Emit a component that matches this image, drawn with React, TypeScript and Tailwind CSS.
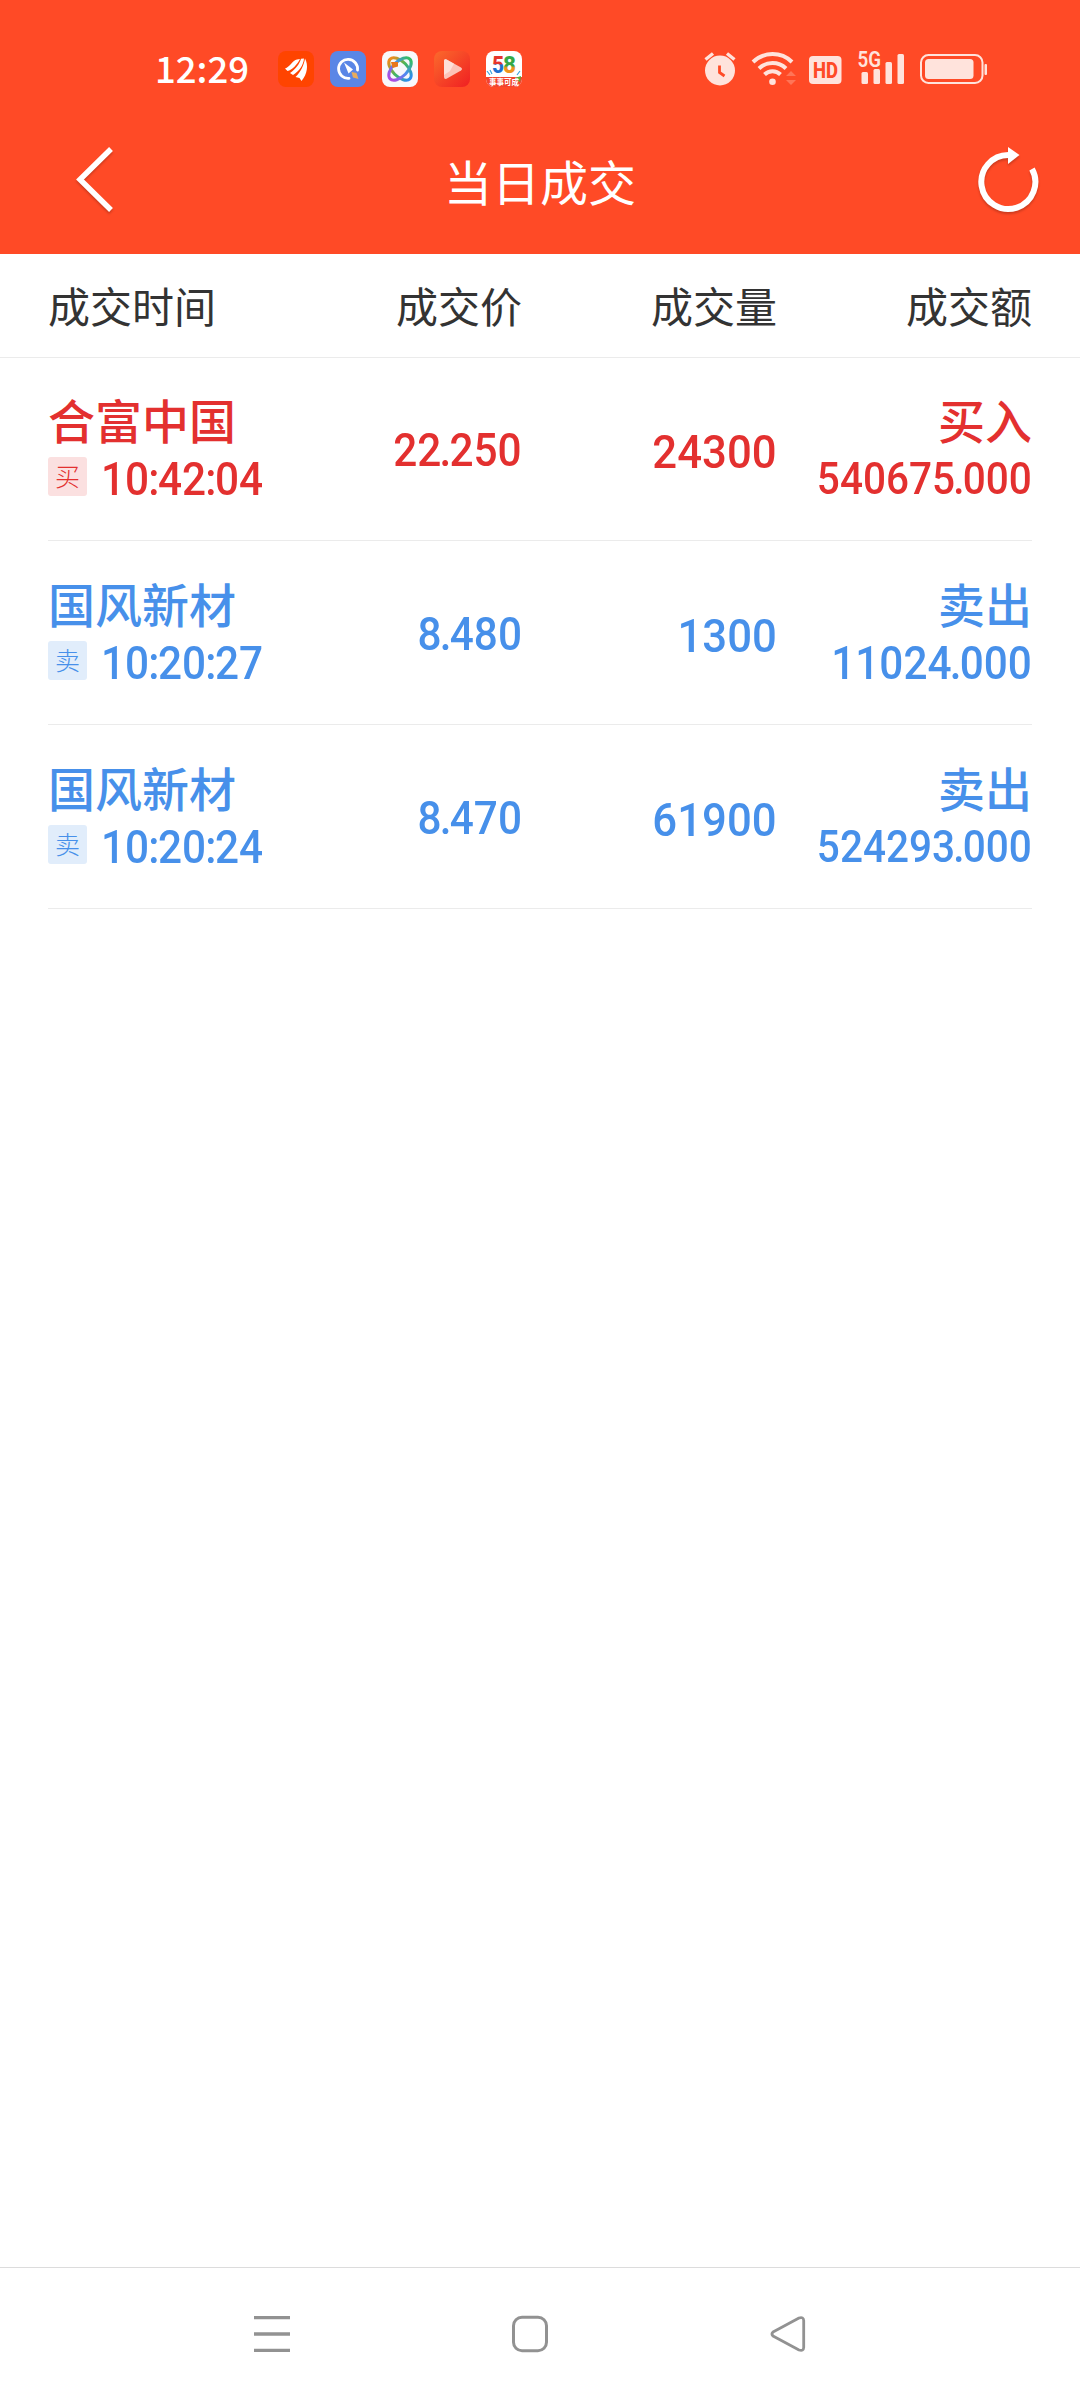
import React from 'react';

type Trade = {
  name: string;
  time: string;
  price: string;
  volume: string;
  amount: string;
  side: 'buy' | 'sell';
};

const trades: Trade[] = [
  { name: '合富中国', time: '10:42:04', price: '22.250', volume: '24300', amount: '540675.000', side: 'buy' },
  { name: '国风新材', time: '10:20:27', price: '8.480', volume: '1300', amount: '11024.000', side: 'sell' },
  { name: '国风新材', time: '10:20:24', price: '8.470', volume: '61900', amount: '524293.000', side: 'sell' },
];

const sides = {
  buy: { tag: '买', label: '买入', text: 'text-[#e3302f]', badge: 'bg-[#fbe0e0]' },
  sell: { tag: '卖', label: '卖出', text: 'text-[#4790ea]', badge: 'bg-[#e1edfb]' },
};

function AppIcons() {
  return (
    <div className="flex items-center gap-4">
      <svg width="36" height="36" viewBox="0 0 36 36">
        <rect width="36" height="36" rx="8" fill="#ff4400" />
        <path d="M7 17.500 C12 16 14.500 9 19 8.500 L22 8 C19.500 13 14 19.500 9.500 20 Z" fill="#fff" />
        <path d="M12 22 C18 18 21.500 13 23 7.800 L26 7.500 C25.500 14 21 20.500 15 24 Z" fill="#fff" />
        <path d="M17.500 26 C23 20.500 26 14 27 7.500 C30.500 14 29.500 23 23.500 30 L21.500 27 Z" fill="#fff" />
      </svg>
      <svg width="36" height="36" viewBox="0 0 36 36">
        <rect width="36" height="36" rx="8" fill="#5a86e6" />
        <path d="M19 27.300 A9.500 9.500 0 1 1 27.500 19" fill="none" stroke="#fff" strokeWidth="2.800" strokeLinecap="round" />
        <path d="M14 11.500 L23 18.500 L18.500 22.500 Z" fill="#fff" />
        <path d="M21.500 21 L26.500 22 L28.500 28 L23 26.500 Z" fill="#e8ac5c" />
      </svg>
      <svg width="36" height="36" viewBox="0 0 36 36">
        <defs>
          <linearGradient id="orbitA" x1="0" y1="0" x2="0" y2="1">
            <stop offset="0" stopColor="#f08a1c" />
            <stop offset="0.500" stopColor="#45b85c" />
            <stop offset="1" stopColor="#2d8cf0" />
          </linearGradient>
          <linearGradient id="orbitB" x1="0" y1="0" x2="0" y2="1">
            <stop offset="0" stopColor="#35bd62" />
            <stop offset="0.450" stopColor="#4b8df2" />
            <stop offset="1" stopColor="#b04be0" />
          </linearGradient>
        </defs>
        <rect width="36" height="36" rx="8" fill="#f8f8fb" />
        <ellipse cx="18" cy="18" rx="7.500" ry="14" transform="rotate(-45 18 18)" fill="none" stroke="url(#orbitA)" strokeWidth="3" />
        <ellipse cx="18" cy="18" rx="7.500" ry="14" transform="rotate(45 18 18)" fill="none" stroke="url(#orbitB)" strokeWidth="3" />
        <path d="M9 11 H16 V15.500 L10.500 17 Z" fill="#e8761d" />
      </svg>
      <svg width="36" height="36" viewBox="0 0 36 36">
        <defs>
          <linearGradient id="play" x1="0" y1="0" x2="1" y2="1">
            <stop offset="0" stopColor="#fb6a2c" />
            <stop offset="1" stopColor="#f01f22" />
          </linearGradient>
        </defs>
        <rect width="36" height="36" rx="8" fill="url(#play)" />
        <path d="M12.500 8.500 L27 16.500 Q29 18 27 19.500 L12.500 27.800 Q10 28.500 10 26 V10 Q10 7.500 12.500 8.500 Z" fill="#fcc3b8" />
        <path d="M10 10 Q10 7.500 12.500 8.500 L20 12.700 L16 20 L10 24 Z" fill="#fee0d8" />
      </svg>
      <svg width="36" height="36" viewBox="0 0 36 36">
        <defs>
          <clipPath id="tile"><rect width="36" height="36" rx="8" /></clipPath>
          <linearGradient id="five" x1="0" y1="0" x2="0" y2="1">
            <stop offset="0.450" stopColor="#e5352b" />
            <stop offset="0.500" stopColor="#1f6fd0" />
          </linearGradient>
          <linearGradient id="eight" x1="0" y1="0" x2="0" y2="1">
            <stop offset="0.520" stopColor="#36a845" />
            <stop offset="0.600" stopColor="#f0941e" />
          </linearGradient>
        </defs>
        <g clipPath="url(#tile)">
          <rect width="36" height="36" fill="#fff" />
          <rect y="26" width="36" height="10" fill="#f2452e" />
          <path d="M1 20 L4 24 M4 19 L6 23 M31 24 L34 20" stroke="#37a5e0" strokeWidth="1.200" />
          <path d="M29 27 L35 25 L34 31 Z" fill="#4fae3d" />
        </g>
        <g fontFamily="Roboto, sans-serif" fontSize="24" fontWeight="800">
          <text x="6" y="22" fill="url(#five)" textLength="12" lengthAdjust="spacingAndGlyphs">5</text>
          <text x="17" y="22" fill="url(#eight)" textLength="13" lengthAdjust="spacingAndGlyphs">8</text>
        </g>
        <text x="3" y="34" fontSize="8.500" fontWeight="700" fill="#fff" textLength="30" lengthAdjust="spacingAndGlyphs">事事可成</text>
      </svg>
    </div>
  );
}

function SystemIcons() {
  return (
    <svg width="290" height="60" viewBox="700 39 290 60" fill="#ffe3dc">
      <circle cx="720" cy="70.500" r="15" />
      <path d="M705.500 59.500 L713 53.500 M734.500 59.500 L727 53.500" stroke="#ffe3dc" strokeWidth="3.400" />
      <path d="M719.500 65.500 V72.500 L724.500 76" fill="none" stroke="#ff4a26" strokeWidth="2.800" />

      <circle cx="772.500" cy="81.700" r="3.300" />
      <g fill="none" stroke="#ffe3dc" strokeWidth="4">
        <path d="M753 62 A28 28 0 0 1 792 62" />
        <path d="M759 68.500 A19.500 19.500 0 0 1 786 68.500" />
        <path d="M764.500 74.500 A11.500 11.500 0 0 1 780.500 74.500" />
      </g>
      <path d="M786 76 L791 71 L796 76 Z M786 80 L791 85 L796 80 Z" fill="#ff7557" />

      <rect x="809" y="56" width="32.500" height="28" rx="4" />
      <text x="813" y="78" fontSize="22" fontWeight="800" fill="#ff4a26" textLength="25" lengthAdjust="spacingAndGlyphs" fontFamily="Roboto, sans-serif">HD</text>

      <text x="857.500" y="67.300" fontSize="21.500" fontWeight="600" textLength="23.500" lengthAdjust="spacingAndGlyphs" fontFamily="Roboto, sans-serif">5G</text>
      <rect x="861.500" y="72" width="6.500" height="12" rx="1.500" />
      <rect x="873.500" y="69" width="6.500" height="15" rx="1.500" />
      <rect x="885.500" y="62" width="6.500" height="22" rx="1.500" />
      <rect x="897.500" y="54" width="6.500" height="30" rx="1.500" />

      <rect x="921" y="55" width="61.500" height="28" rx="7.500" fill="none" stroke="#ffe3dc" strokeWidth="2" />
      <rect x="925" y="59" width="48.500" height="20" rx="3.500" />
      <rect x="984.500" y="64" width="2.500" height="11" rx="1" />
    </svg>
  );
}

function StatusBar() {
  return (
    <div className="flex h-[108px] items-center pt-[30px] pl-[155px] pr-[90px]">
      <span className="w-[123px] pb-[2px] text-[36.5px] leading-none font-medium text-white">12:29</span>
      <AppIcons />
      <div className="ml-auto">
        <SystemIcons />
      </div>
    </div>
  );
}

function TitleBar() {
  return (
    <div className="flex h-[146px] items-center justify-between pl-[72px] pr-[38px]">
      <svg width="68" height="72" viewBox="72 145 68 72" fill="none" className="drop-shadow-[0_2px_1px_rgba(0,0,0,0.2)]">
        <path d="M111 149 L80 179.500 L111 210" stroke="#fff" strokeWidth="5.500" />
      </svg>
      <h1 className="mr-[34px] pb-[2px] text-[48px] leading-[56px] text-white">当日成交</h1>
      <svg width="68" height="72" viewBox="974 145 68 72" fill="none" className="drop-shadow-[0_2px_1px_rgba(0,0,0,0.2)]">
        <path d="M1009 155 A27 27 0 1 0 1032 169" stroke="#fff" strokeWidth="6" />
        <path d="M1008 147 L1019.500 155 L1008 164 Z" fill="#fff" />
      </svg>
    </div>
  );
}

// Narrow figures with tightly set colons and points
function Digits({ value, className }: { value: string; className: string }) {
  return (
    <span className={`inline-block font-['Roboto',sans-serif] whitespace-nowrap ${className}`}>
      {value.split(/([:.])/).map((part, index) =>
        part === ':' || part === '.' ? (
          <span key={index} className={part === ':' ? '-ml-px tracking-[-1.5px]' : '-ml-[2px] tracking-[-2px]'}>{part}</span>
        ) : (
          part
        )
      )}
    </span>
  );
}

function TradeRow({ trade }: { trade: Trade }) {
  const side = sides[trade.side];
  const amountSize = trade.amount.length > 9 ? 'text-[45px]' : 'text-[47px]';

  return (
    <div className={`mx-12 grid h-[184px] grid-cols-[219px_255px_255px_255px] border-b border-[#ebebeb] font-medium ${side.text}`}>
      <div className="pt-[34px]">
        <div className="text-[47px] leading-[56px] whitespace-nowrap">{trade.name}</div>
        <div className="mt-[10px] flex h-[39px] items-start">
          <span className={`flex size-[39px] shrink-0 items-center justify-center rounded-[3px] pb-[2px] text-[25px] leading-none font-light ${side.badge}`}>
            {side.tag}
          </span>
          <Digits value={trade.time} className="mt-[2px] ml-[14px] origin-left scale-x-[0.9] text-[47px] leading-[39px]" />
        </div>
      </div>
      <div className="pt-[73px] text-right">
        <Digits value={trade.price} className="origin-right scale-x-[0.9] text-[47px] leading-[40px]" />
      </div>
      <div className="pt-[75px] text-right">
        <Digits value={trade.volume} className="origin-right scale-x-[0.93] text-[47px] leading-[40px]" />
      </div>
      <div className="flex flex-col items-end pt-[34px]">
        <div className="text-[47px] leading-[56px]">{side.label}</div>
        <Digits value={trade.amount} className={`mt-[12px] origin-right scale-x-[0.9] leading-[39px] ${amountSize}`} />
      </div>
    </div>
  );
}

function NavBar() {
  return (
    <nav className="flex h-[133px] items-center justify-between border-t border-[#dcdcdc] pl-[254px] pr-[274px]">
      <svg width="36" height="38" viewBox="0 0 36 38" stroke="#929292" strokeWidth="3.300">
        <path d="M0 2.700 H36 M0 19 H36 M0 35.300 H36" />
      </svg>
      <svg width="36" height="38" viewBox="0 0 36 38" fill="none" stroke="#929292" strokeWidth="3">
        <rect x="1.500" y="2.200" width="33" height="33.500" rx="8.500" />
      </svg>
      <svg width="36" height="38" viewBox="0 0 36 38" fill="none" stroke="#929292" strokeWidth="2.800" strokeLinejoin="round">
        <path d="M3 17 Q1 19 3 21 L29 35 Q33.500 36.500 33.700 32.500 V5.500 Q33.500 1.500 29 3 Z" />
      </svg>
    </nav>
  );
}

export default function App() {
  return (
    <div className="flex h-[2400px] w-[1080px] flex-col bg-white font-['Noto_Sans_CJK_SC',sans-serif]">
      <header className="bg-[#ff4a26]">
        <StatusBar />
        <TitleBar />
      </header>

      <div className="grid h-[104px] grid-cols-[219px_255px_255px_255px] border-b border-[#ebebeb] px-12 pt-[23px] text-[42px] leading-[56px] text-[#333]">
        <span className="whitespace-nowrap">成交时间</span>
        <span className="text-right">成交价</span>
        <span className="text-right">成交量</span>
        <span className="text-right">成交额</span>
      </div>

      <main className="-mt-px flex-1">
        {trades.map((trade) => (
          <TradeRow key={trade.time} trade={trade} />
        ))}
      </main>

      <NavBar />
    </div>
  );
}
